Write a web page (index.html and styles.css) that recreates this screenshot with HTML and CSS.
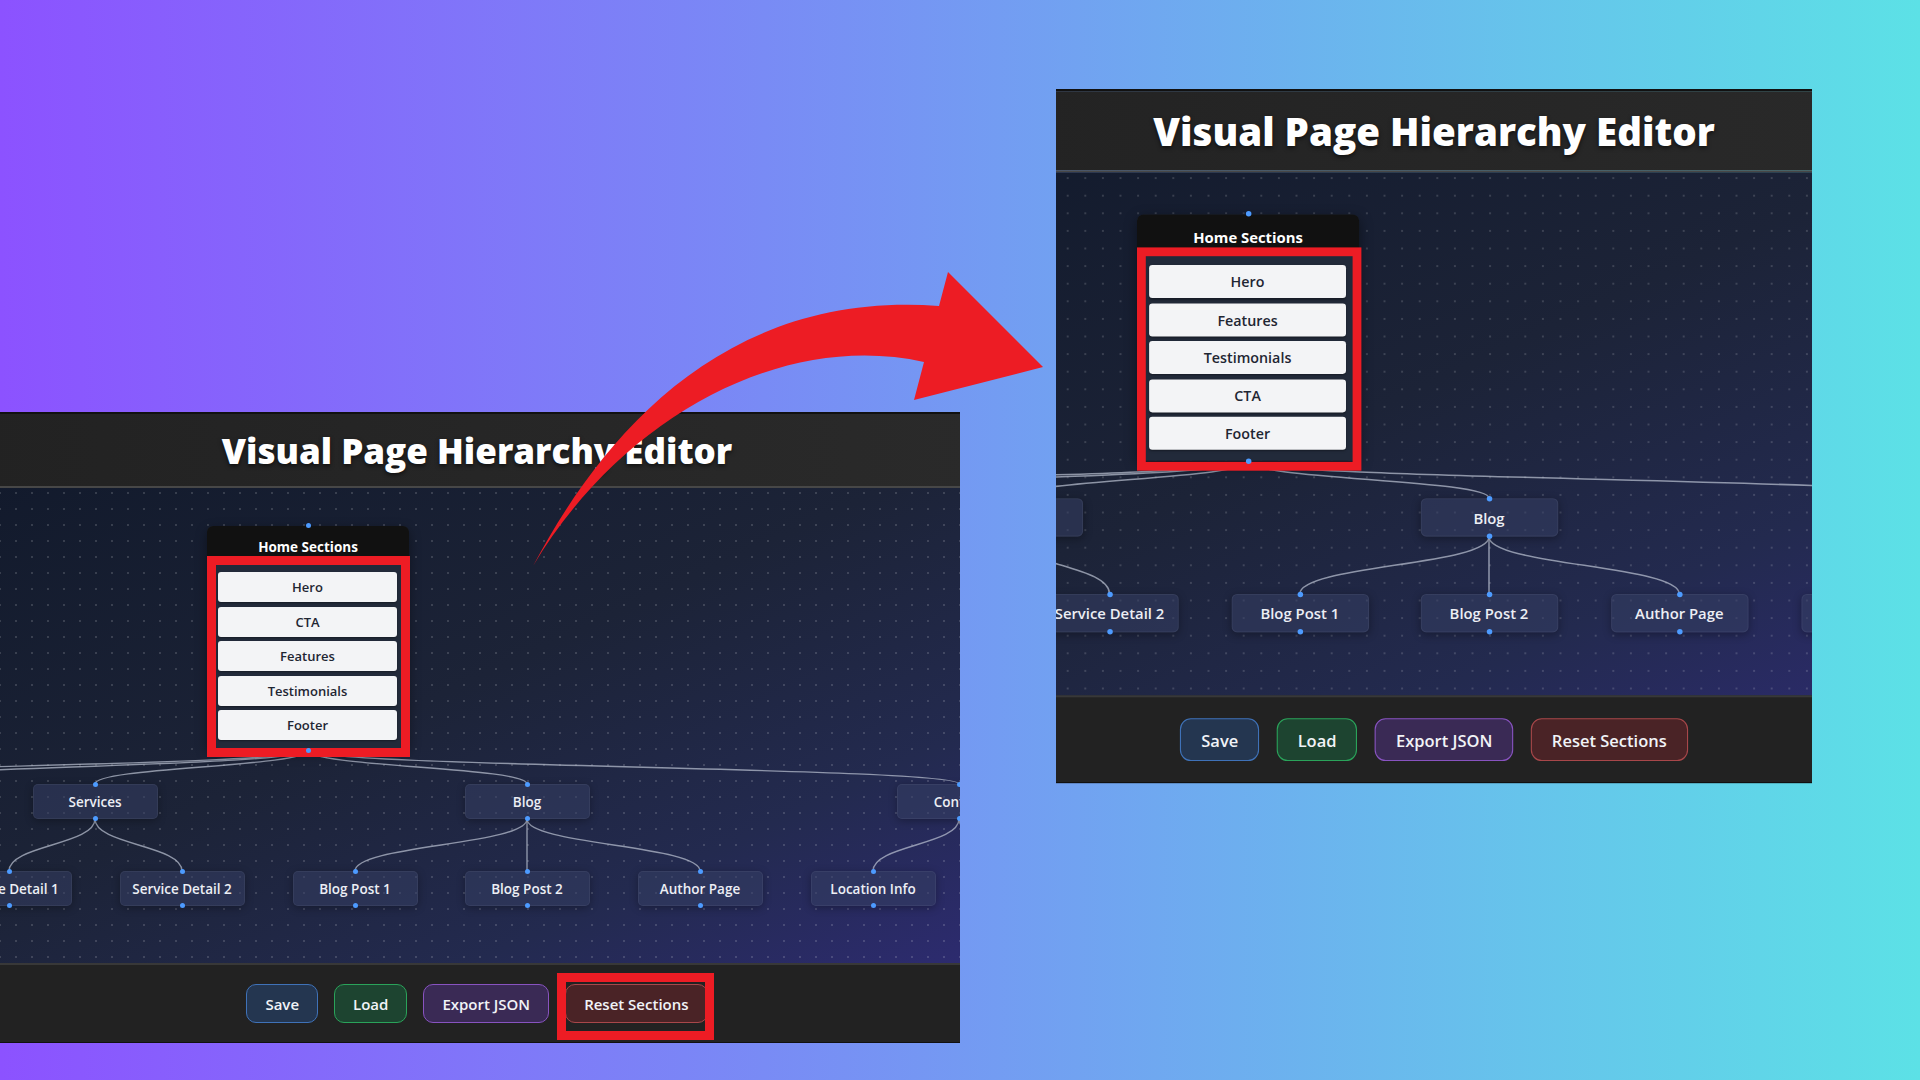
FILE: index.html
```html
<!DOCTYPE html>
<html lang="en">
<head>
<meta charset="utf-8">
<title>Visual Page Hierarchy Editor</title>
<link rel="stylesheet" href="styles.css">
</head>
<body>
<div class="stage">

  <section class="window window--left">
    <div class="app app--left">
      <header class="app-header"><h1 class="app-title">Visual Page Hierarchy Editor</h1></header>
      <main class="canvas">
        <svg class="edges" width="1000" height="475" viewBox="0 0 1000 475">
          <path d="M331 262C331 279 -314 279 -314 296"/>
          <path d="M331 262C331 279 -141 279 -141 296"/>
          <path d="M331 262C331 279 118 279 118 296"/>
          <path d="M331 262C331 279 550 279 550 296"/>
          <path d="M331 262C331 279 982 279 982 296"/>
          <path d="M118 331C118 357 32 357 32 383"/>
          <path d="M118 331C118 357 205 357 205 383"/>
          <path d="M550 331C550 357 378 357 378 383"/>
          <path d="M550 331L550 383"/>
          <path d="M550 331C550 357 723 357 723 383"/>
          <path d="M982 331C982 357 896 357 896 383"/>
          <path d="M982 331C982 357 1069 357 1069 383"/>
        </svg>
        <div class="section-card">
          <div class="section-card__title">Home Sections</div>
          <ul class="section-list">
            <li class="section-item">Hero</li>
            <li class="section-item">CTA</li>
            <li class="section-item">Features</li>
            <li class="section-item">Testimonials</li>
            <li class="section-item">Footer</li>
          </ul>
          <div class="highlight highlight--card"></div>
        </div>
        <div class="node row-1" style="left:118px">Services</div>
        <div class="node row-1" style="left:550px">Blog</div>
        <div class="node row-1" style="left:982px">Contact</div>
        <div class="node row-2" style="left:32px">Service Detail 1</div>
        <div class="node row-2" style="left:205px">Service Detail 2</div>
        <div class="node row-2" style="left:378px">Blog Post 1</div>
        <div class="node row-2" style="left:550px">Blog Post 2</div>
        <div class="node row-2" style="left:723px">Author Page</div>
        <div class="node row-2" style="left:896px">Location Info</div>
      </main>
      <footer class="app-footer">
        <button class="btn btn--save">Save</button>
        <button class="btn btn--load">Load</button>
        <button class="btn btn--export">Export JSON</button>
        <button class="btn btn--reset">Reset Sections<span class="highlight highlight--button"></span></button>
      </footer>
    </div>
  </section>

  <section class="window window--right">
    <div class="app app--right">
      <header class="app-header"><h1 class="app-title">Visual Page Hierarchy Editor</h1></header>
      <main class="canvas">
        <svg class="edges" width="1000" height="475" viewBox="0 0 1000 475">
          <path d="M331 262C331 279 -314 279 -314 296"/>
          <path d="M331 262C331 279 -141 279 -141 296"/>
          <path d="M331 262C331 279 118 279 118 296"/>
          <path d="M331 262C331 279 550 279 550 296"/>
          <path d="M331 262C331 279 982 279 982 296"/>
          <path d="M118 331C118 357 32 357 32 383"/>
          <path d="M118 331C118 357 205 357 205 383"/>
          <path d="M550 331C550 357 378 357 378 383"/>
          <path d="M550 331L550 383"/>
          <path d="M550 331C550 357 723 357 723 383"/>
          <path d="M982 331C982 357 896 357 896 383"/>
        </svg>
        <div class="section-card">
          <div class="section-card__title">Home Sections</div>
          <ul class="section-list">
            <li class="section-item">Hero</li>
            <li class="section-item">Features</li>
            <li class="section-item">Testimonials</li>
            <li class="section-item">CTA</li>
            <li class="section-item">Footer</li>
          </ul>
          <div class="highlight highlight--card highlight--thin"></div>
        </div>
        <div class="node row-1" style="left:118px">Services</div>
        <div class="node row-1" style="left:550px">Blog</div>
        <div class="node row-1" style="left:982px">Contact</div>
        <div class="node row-2" style="left:32px">Service Detail 1</div>
        <div class="node row-2" style="left:205px">Service Detail 2</div>
        <div class="node row-2" style="left:378px">Blog Post 1</div>
        <div class="node row-2" style="left:550px">Blog Post 2</div>
        <div class="node row-2" style="left:723px">Author Page</div>
        <div class="node row-2" style="left:896px">Location Info</div>
      </main>
      <footer class="app-footer">
        <button class="btn btn--save">Save</button>
        <button class="btn btn--load">Load</button>
        <button class="btn btn--export">Export JSON</button>
        <button class="btn btn--reset">Reset Sections</button>
      </footer>
    </div>
  </section>

  <svg class="arrow" width="1920" height="1080" viewBox="0 0 1920 1080">
    <path d="M533 566C600 440 720 290 939 306L948 272L1043 367L914 400L924 362C780 330 620 420 533 566Z"/>
  </svg>
</div>
</body>
</html>
```

FILE: styles.css
```css
html, body {
  margin: 0;
  padding: 0;
}

body {
  width: 1920px;
  height: 1080px;
  overflow: hidden;
  background: linear-gradient(90deg, #8c52ff 0%, #5ce1e6 100%);
  font-family: "Open Sans", "Noto Sans", sans-serif;
}

.stage {
  position: relative;
  width: 1920px;
  height: 1080px;
}

/* screenshot windows placed on the free canvas */
.window {
  position: absolute;
  overflow: hidden;
}

.window--left {
  left: 0;
  top: 412px;
  width: 960px;
  height: 631px;
}

.window--right {
  left: 1056px;
  top: 89px;
  width: 756px;
  height: 695px;
}

.app {
  width: 1000px;
  height: 631px;
  box-sizing: border-box;
  border-top: 2px solid #111;
  display: flex;
  flex-direction: column;
}

.app--left {
  margin-left: -23px;
}

.app--right {
  margin-left: -122px;
  transform: scale(1.1);
  transform-origin: 500px 0;
}

.app-header {
  flex: none;
  height: 72px;
  background: linear-gradient(90deg, #222 0%, #2a2a2a 100%);
  border-bottom: 2px solid #474747;
  display: flex;
  align-items: center;
  justify-content: center;
}

.app-title {
  margin: 0;
  color: #fff;
  font-family: "Open Sans", sans-serif;
  font-weight: 800;
  font-size: 35px;
  line-height: 1;
  text-shadow: 0 2px 4px rgba(0, 0, 0, 0.6);
}

.canvas {
  flex: none;
  position: relative;
  height: 475px;
  background-color: #1a2034;
  background-image:
    radial-gradient(circle at 8px 8px, rgba(255, 255, 255, 0.15) 0.8px, transparent 1.3px),
    linear-gradient(155deg, #121a2c 0%, #1c2337 45%, #232a4f 75%, #2d2b70 100%);
  background-size: 16px 16px, 100% 100%;
  background-position: -1px -3px, 0 0;
}

.edges {
  position: absolute;
  left: 0;
  top: 0;
  overflow: visible;
  fill: none;
  stroke: rgba(190, 196, 212, 0.7);
  stroke-width: 1.4;
}

/* Home sections card */
.section-card {
  position: absolute;
  left: 230px;
  top: 38px;
  width: 202px;
  height: 224px;
  box-sizing: border-box;
  border-radius: 6px;
  background: #222a3a;
  box-shadow: 0 4px 12px rgba(0, 0, 0, 0.4);
}

.section-card::before,
.section-card::after,
.node::before,
.node::after {
  content: "";
  position: absolute;
  left: 50%;
  width: 5px;
  height: 5px;
  margin-left: -2.5px;
  border-radius: 50%;
  background: #4d9bff;
}

.section-card::before,
.node::before {
  top: -3px;
}

.section-card::after,
.node::after {
  bottom: -3px;
}

.section-card__title {
  height: 34px;
  box-sizing: border-box;
  padding-top: 13px;
  background: #111;
  border-radius: 6px 6px 0 0;
  color: #fff;
  font-weight: 700;
  font-size: 13.5px;
  line-height: 16px;
  text-align: center;
}

.section-list {
  list-style: none;
  margin: 0;
  padding: 12px 12px 0 11px;
  display: flex;
  flex-direction: column;
  gap: 4.5px;
}

.section-item {
  height: 30px;
  display: flex;
  align-items: center;
  justify-content: center;
  background: #f3f4f6;
  border-radius: 3px;
  box-shadow: 0 1px 2px rgba(0, 0, 0, 0.35);
  color: #1f2633;
  font-weight: 600;
  font-size: 13px;
}

/* red annotation boxes */
.highlight {
  position: absolute;
  box-sizing: border-box;
  border: 9px solid #ed1c24;
  pointer-events: none;
}

.highlight--card {
  left: 0;
  right: -1px;
  top: 30px;
  bottom: -7px;
}

.highlight--thin {
  border-width: 8.2px;
  right: -2px;
  bottom: -9px;
}

.highlight--button {
  left: -9px;
  right: -7px;
  top: -12px;
  bottom: -18px;
}

/* tree nodes */
.node {
  position: absolute;
  width: 125px;
  height: 35px;
  margin-left: -62.5px;
  box-sizing: border-box;
  display: flex;
  align-items: center;
  justify-content: center;
  white-space: nowrap;
  background: rgba(52, 62, 98, 0.55);
  border: 1px solid rgba(255, 255, 255, 0.05);
  border-radius: 5px;
  box-shadow: 0 2px 8px rgba(0, 0, 0, 0.3);
  color: #eceef4;
  font-weight: 600;
  font-size: 13.5px;
}

.row-1 {
  top: 296px;
}

.row-2 {
  top: 383px;
}

/* footer */
.app-footer {
  flex: none;
  height: 77px;
  background: #222;
  border-top: 2px solid #383838;
  border-bottom: 1px solid #111;
  display: flex;
  align-items: center;
  justify-content: center;
  gap: 16px;
}

.btn {
  position: relative;
  height: 39px;
  padding: 0 18px;
  border-radius: 10px;
  border: 1.5px solid;
  font-family: "Open Sans", sans-serif;
  font-weight: 600;
  font-size: 15px;
  color: #f1f3f7;
}

.btn--save {
  background: #243650;
  border-color: #3f72b8;
}

.btn--load {
  background: #1d4430;
  border-color: #2aa35a;
}

.btn--export {
  background: #3a2a55;
  border-color: #8853c0;
}

.btn--reset {
  background: #4a2326;
  border-color: #a8474a;
}

.arrow {
  position: absolute;
  left: 0;
  top: 0;
  pointer-events: none;
  fill: #ed1c24;
}
```
